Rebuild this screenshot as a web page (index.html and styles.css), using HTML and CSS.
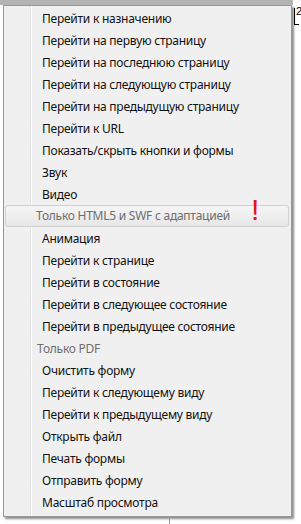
FILE: index.html
```html
<!DOCTYPE html>
<html lang="ru">
<head>
<meta charset="utf-8">
<link rel="stylesheet" href="styles.css">
</head>
<body>
<div class="screen">
  <div class="left">
    <div class="band"></div>
    <div class="menu">
      <div class="item">Перейти к назначению</div>
      <div class="item">Перейти на первую страницу</div>
      <div class="item">Перейти на последнюю страницу</div>
      <div class="item">Перейти на следующую страницу</div>
      <div class="item">Перейти на предыдущую страницу</div>
      <div class="item">Перейти к URL</div>
      <div class="item">Показать/скрыть кнопки и формы</div>
      <div class="item">Звук</div>
      <div class="item">Видео</div>
      <div class="header hot">Только HTML5 и SWF с адаптацией<span class="mark">!</span></div>
      <div class="item">Анимация</div>
      <div class="item">Перейти к странице</div>
      <div class="item">Перейти в состояние</div>
      <div class="item">Перейти в следующее состояние</div>
      <div class="item">Перейти в предыдущее состояние</div>
      <div class="header">Только PDF</div>
      <div class="item">Очистить форму</div>
      <div class="item">Перейти к следующему виду</div>
      <div class="item">Перейти к предыдущему виду</div>
      <div class="item">Открыть файл</div>
      <div class="item">Печать формы</div>
      <div class="item">Отправить форму</div>
      <div class="item">Масштаб просмотра</div>
    </div>
    <div class="below"></div>
  </div>
  <div class="right">
    <div class="bracket"><span class="num">2</span></div>
  </div>
</div>
</body>
</html>
```
FILE: styles.css
```css
html, body {
  margin: 0;
  padding: 0;
  background: #ffffff;
}
body {
  width: 301px;
  height: 524px;
  overflow: hidden;
  font-family: "Noto Sans", "Open Sans", sans-serif;
  font-size: 12px;
  letter-spacing: -0.25px;
}
.screen {
  display: flex;
  align-items: flex-start;
}
.left {
  width: 293px;
  flex: none;
}
.band {
  height: 5px;
  background: #b3b3b3;
}
.menu {
  margin-left: 3px;
  border: 1px solid #979797;
  padding: 2px;
  box-sizing: border-box;
  width: 289px;
  background:
    linear-gradient(to right, transparent 26px, #e2e3e3 26px, #e2e3e3 27px, #ffffff 27px, #ffffff 28px, transparent 28px),
    #f0f0f0;
  box-shadow: 2px 2px 2px rgba(0, 0, 0, 0.45);
}
.item, .header {
  height: 22px;
  line-height: 22px;
  white-space: nowrap;
  color: #111111;
  padding-left: 36px;
}
.header {
  color: #6e6e6e;
  padding-left: 31px;
}
.hot {
  position: relative;
  margin-left: -1px;
  padding-left: 30px;
  height: 20px;
  line-height: 20px;
  margin-top: -1px;
  margin-bottom: 1px;
  border: 1px solid #d2d2d2;
  border-radius: 3px;
  background: linear-gradient(#f5f5f5, #e7e7e7);
}
.mark {
  position: absolute;
  left: 245px;
  top: -16px;
  font-family: "Liberation Sans", sans-serif;
  font-size: 30px;
  line-height: 40px;
  color: #e3141e;
}
.below {
  height: 8px;
  margin-left: 169px;
  border-left: 1px solid #9a9a9a;
}
.right {
  flex: 1;
  padding-top: 8px;
}
.bracket {
  margin-left: 1px;
  height: 16px;
  width: 4px;
  border-left: 1px solid #000;
  border-bottom: 1px solid #000;
  position: relative;
}
.num {
  position: absolute;
  left: 1px;
  top: -3px;
  font-family: "Liberation Sans", sans-serif;
  font-size: 11px;
  color: #000;
}
```
